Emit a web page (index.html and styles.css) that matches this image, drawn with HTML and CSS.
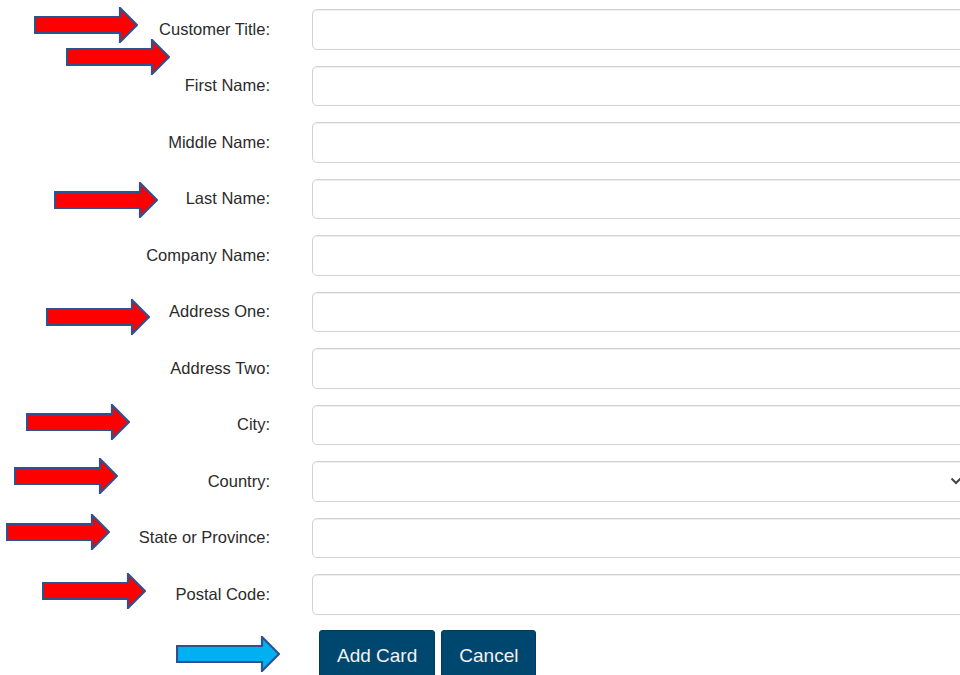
FILE: index.html
```html
<!DOCTYPE html>
<html lang="en">
<head>
<meta charset="utf-8">
<title>Add Card</title>
<link rel="stylesheet" href="styles.css">
</head>
<body>
<form class="card-form">
  <label class="field-label" for="title">Customer Title:</label>
  <input class="field-input" id="title" type="text">

  <label class="field-label" for="first">First Name:</label>
  <input class="field-input" id="first" type="text">

  <label class="field-label" for="middle">Middle Name:</label>
  <input class="field-input" id="middle" type="text">

  <label class="field-label" for="last">Last Name:</label>
  <input class="field-input" id="last" type="text">

  <label class="field-label" for="company">Company Name:</label>
  <input class="field-input" id="company" type="text">

  <label class="field-label" for="addr1">Address One:</label>
  <input class="field-input" id="addr1" type="text">

  <label class="field-label" for="addr2">Address Two:</label>
  <input class="field-input" id="addr2" type="text">

  <label class="field-label" for="city">City:</label>
  <input class="field-input" id="city" type="text">

  <label class="field-label" for="country">Country:</label>
  <select class="field-input field-select" id="country">
    <option></option>
  </select>

  <label class="field-label" for="state">State or Province:</label>
  <input class="field-input" id="state" type="text">

  <label class="field-label" for="postal">Postal Code:</label>
  <input class="field-input" id="postal" type="text">

  <div class="actions">
    <button class="btn" type="submit">Add Card</button>
    <button class="btn" type="button">Cancel</button>
  </div>
</form>

<!-- callout arrows -->
<svg class="arrow a1" viewBox="0 0 104 36"><polygon points="1,10 86,10 86,1 103,18 86,35 86,26 1,26"/></svg>
<svg class="arrow a2" viewBox="0 0 104 36"><polygon points="1,10 86,10 86,1 103,18 86,35 86,26 1,26"/></svg>
<svg class="arrow a3" viewBox="0 0 104 36"><polygon points="1,10 86,10 86,1 103,18 86,35 86,26 1,26"/></svg>
<svg class="arrow a4" viewBox="0 0 104 36"><polygon points="1,10 86,10 86,1 103,18 86,35 86,26 1,26"/></svg>
<svg class="arrow a5" viewBox="0 0 104 36"><polygon points="1,10 86,10 86,1 103,18 86,35 86,26 1,26"/></svg>
<svg class="arrow a6" viewBox="0 0 104 36"><polygon points="1,10 86,10 86,1 103,18 86,35 86,26 1,26"/></svg>
<svg class="arrow a7" viewBox="0 0 104 36"><polygon points="1,10 86,10 86,1 103,18 86,35 86,26 1,26"/></svg>
<svg class="arrow a8" viewBox="0 0 104 36"><polygon points="1,10 86,10 86,1 103,18 86,35 86,26 1,26"/></svg>
<svg class="arrow arrow-blue a9" viewBox="0 0 104 36"><polygon points="1,10 86,10 86,1 103,18 86,35 86,26 1,26"/></svg>
</body>
</html>
```

FILE: styles.css
```css
html, body {
  margin: 0;
  padding: 0;
  overflow: hidden;
  background: #fff;
}

body {
  position: relative;
  width: 960px;
  height: 675px;
  font-family: "Liberation Sans", Arial, sans-serif;
  color: #333;
}

.card-form {
  display: grid;
  grid-template-columns: 262px 663px;
  column-gap: 42px;
  row-gap: 16px;
  padding: 9px 0 0 8px;
}

.field-label {
  align-self: center;
  text-align: right;
  font-size: 16.5px;
  line-height: 20px;
  margin-top: -1px;
  color: #2b2b2b;
  white-space: nowrap;
}

.field-input {
  box-sizing: border-box;
  height: 40.5px;
  width: 100%;
  margin: 0;
  padding: 6px 12px;
  border: 1px solid #d2d2d2;
  border-radius: 5px;
  background: #fff;
  box-shadow: inset 0 1px 1px rgba(0, 0, 0, 0.075);
  font: 15px "Liberation Sans", Arial, sans-serif;
  color: #333;
}

.field-select {
  appearance: none;
  -webkit-appearance: none;
  background-image: url("data:image/svg+xml;utf8,<svg xmlns='http://www.w3.org/2000/svg' width='12' height='8' viewBox='0 0 12 8'><path d='M1.5 1.5 L6 6 L10.5 1.5' fill='none' stroke='%23444' stroke-width='2'/></svg>");
  background-repeat: no-repeat;
  background-position: right 12px center;
  background-size: 12px 8px;
}

.actions {
  grid-column: 2;
  display: flex;
  gap: 6px;
  margin-top: -0.5px;
  padding-left: 7px;
}

.btn {
  height: 48px;
  padding: 13px 17px 11px;
  border: 1px solid #003a5c;
  border-radius: 3px;
  background: #00476f;
  color: #f2f2f2;
  font: 19px/24px "Liberation Sans", Arial, sans-serif;
  cursor: pointer;
}

.arrow {
  position: absolute;
  width: 104px;
  height: 36px;
}

.arrow polygon {
  fill: #ff0000;
  stroke: #2f528f;
  stroke-width: 2.2;
  stroke-linejoin: miter;
}

.arrow-blue polygon {
  fill: #00b0f0;
}

.a1 { left: 34px; top: 7px; }
.a2 { left: 66px; top: 39px; }
.a3 { left: 54px; top: 182px; }
.a4 { left: 46px; top: 299px; }
.a5 { left: 26px; top: 404px; }
.a6 { left: 14px; top: 458px; }
.a7 { left: 6px; top: 514px; }
.a8 { left: 42px; top: 573px; }
.a9 { left: 176px; top: 636px; }
```
